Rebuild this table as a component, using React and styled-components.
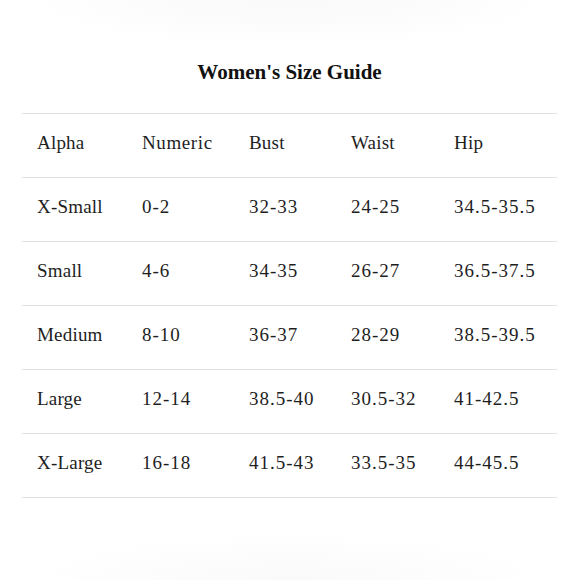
import styled, { createGlobalStyle } from "styled-components";

const GlobalStyle = createGlobalStyle`
  html, body {
    margin: 0;
    padding: 0;
    background: #ffffff;
  }
  body {
    font-family: "Liberation Serif", "Times New Roman", serif;
    color: #1e1e1e;
  }
`;

const sizes = [
  ["X-Small", "0-2", "32-33", "24-25", "34.5-35.5"],
  ["Small", "4-6", "34-35", "26-27", "36.5-37.5"],
  ["Medium", "8-10", "36-37", "28-29", "38.5-39.5"],
  ["Large", "12-14", "38.5-40", "30.5-32", "41-42.5"],
  ["X-Large", "16-18", "41.5-43", "33.5-35", "44-45.5"],
];

const headers = ["Alpha", "Numeric", "Bust", "Waist", "Hip"];

export default function App() {
  return (
    <>
      <GlobalStyle />
      <Page>
        <Title>Women's Size Guide</Title>
        <Table>
          <Row>
            {headers.map((h) => (
              <Cell key={h} $wide={h === "Numeric"}>
                {h}
              </Cell>
            ))}
          </Row>
          {sizes.map((r) => (
            <Row key={r[0]}>
              {r.map((v, i) => (
                <Cell key={i} $numeric={i > 0}>
                  {v}
                </Cell>
              ))}
            </Row>
          ))}
        </Table>
      </Page>
    </>
  );
}

const Page = styled.div`
  width: 580px;
  height: 580px;
  box-sizing: border-box;
  padding: 60px 23px 0 22px;
  background:
    radial-gradient(ellipse 46% 8% at 50% 0%, #f9f9f9, rgba(255, 255, 255, 0)),
    radial-gradient(ellipse 46% 8% at 50% 100%, #fafafa, rgba(255, 255, 255, 0)),
    #ffffff;
`;

const Title = styled.h1`
  margin: 0 0 28px;
  font-size: 21px;
  line-height: 25px;
  font-weight: 700;
  text-align: center;
  color: #111;
`;

const Table = styled.div`
  border-top: 1px solid #e2e2e2;
`;

const Row = styled.div`
  display: grid;
  grid-template-columns: 105px 107px 102px 103px 1fr;
  height: 63px;
  align-items: center;
  border-bottom: 1px solid #e2e2e2;
`;

const Cell = styled.div`
  padding: 0 0 5px 15px;
  font-size: 19px;
  line-height: 24px;
  letter-spacing: ${(p) => (p.$numeric ? "1px" : p.$wide ? "0.6px" : "0.2px")};
`;
